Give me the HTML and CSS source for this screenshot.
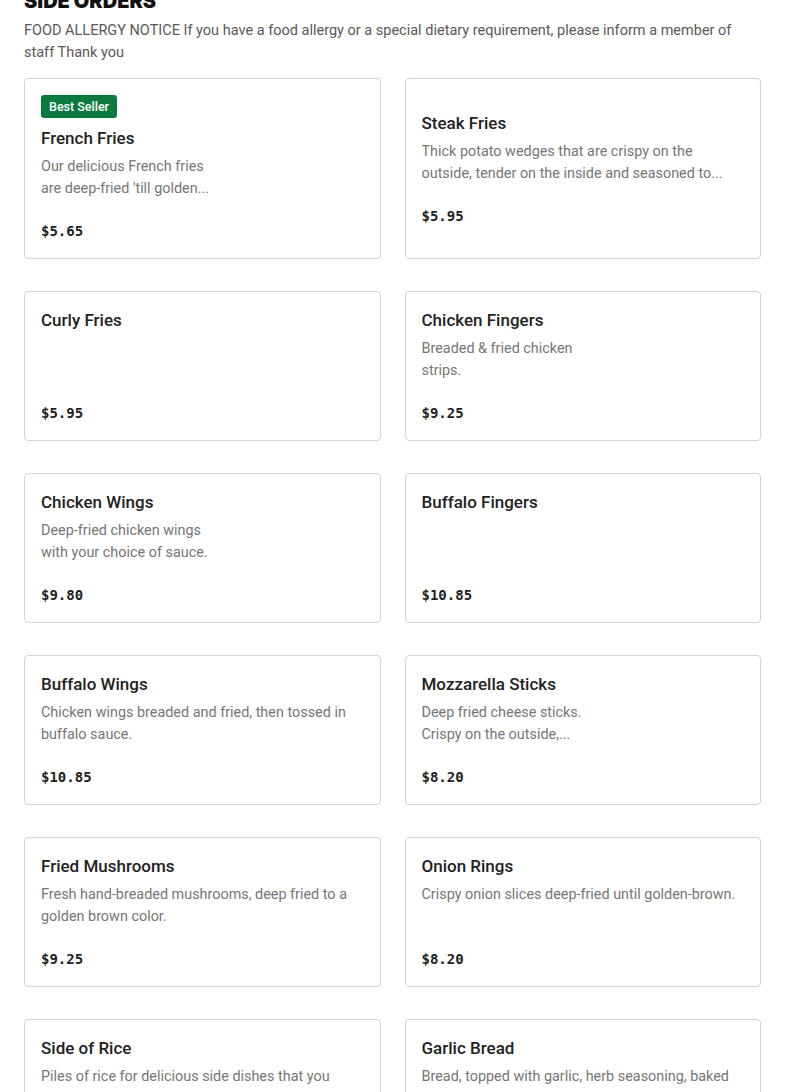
FILE: index.html
```html
<!DOCTYPE html>
<html lang="en">
<head>
    <meta charset="UTF-8">
    <meta name="viewport" content="width=device-width, initial-scale=1.0">
    <title>Side Orders</title>
    <link rel="stylesheet" href="styles.css">
</head>
<body>
    <div class="menu">
        <h2 class="section-title">Side Orders</h2>
        <p class="notice">FOOD ALLERGY NOTICE If you have a food allergy or a special dietary requirement, please inform a member of staff Thank you</p>

        <div class="items">
            <div class="item">
                <span class="badge">Best Seller</span>
                <h3 class="item-name">French Fries</h3>
                <p class="item-desc">Our delicious French fries<br>are deep-fried 'till golden...</p>
                <div class="item-price">$5.65</div>
            </div>
            <div class="item">
                <h3 class="item-name">Steak Fries</h3>
                <p class="item-desc">Thick potato wedges that are crispy on the<br>outside, tender on the inside and seasoned to...</p>
                <div class="item-price">$5.95</div>
            </div>
            <div class="item">
                <h3 class="item-name">Curly Fries</h3>
                <p class="item-desc"></p>
                <div class="item-price">$5.95</div>
            </div>
            <div class="item">
                <h3 class="item-name">Chicken Fingers</h3>
                <p class="item-desc">Breaded &amp; fried chicken<br>strips.</p>
                <div class="item-price">$9.25</div>
            </div>
            <div class="item">
                <h3 class="item-name">Chicken Wings</h3>
                <p class="item-desc">Deep-fried chicken wings<br>with your choice of sauce.</p>
                <div class="item-price">$9.80</div>
            </div>
            <div class="item">
                <h3 class="item-name">Buffalo Fingers</h3>
                <p class="item-desc"></p>
                <div class="item-price">$10.85</div>
            </div>
            <div class="item">
                <h3 class="item-name">Buffalo Wings</h3>
                <p class="item-desc">Chicken wings breaded and fried, then tossed in<br>buffalo sauce.</p>
                <div class="item-price">$10.85</div>
            </div>
            <div class="item">
                <h3 class="item-name">Mozzarella Sticks</h3>
                <p class="item-desc">Deep fried cheese sticks.<br>Crispy on the outside,...</p>
                <div class="item-price">$8.20</div>
            </div>
            <div class="item">
                <h3 class="item-name">Fried Mushrooms</h3>
                <p class="item-desc">Fresh hand-breaded mushrooms, deep fried to a<br>golden brown color.</p>
                <div class="item-price">$9.25</div>
            </div>
            <div class="item">
                <h3 class="item-name">Onion Rings</h3>
                <p class="item-desc">Crispy onion slices deep-fried until golden-brown.</p>
                <div class="item-price">$8.20</div>
            </div>
            <div class="item">
                <h3 class="item-name">Side of Rice</h3>
                <p class="item-desc">Piles of rice for delicious side dishes that you<br>can share with the table...</p>
                <div class="item-price">$4.50</div>
            </div>
            <div class="item">
                <h3 class="item-name">Garlic Bread</h3>
                <p class="item-desc">Bread, topped with garlic, herb seasoning, baked<br>until golden...</p>
                <div class="item-price">$5.25</div>
            </div>
        </div>
    </div>
</body>
</html>
```

FILE: styles.css
```css
body {
    font-family: Roboto, "Liberation Sans", Arial, sans-serif;
    margin: 0;
    padding: 0;
    background: #fff;
    color: #222;
}
.menu {
    padding: 0 24px 40px;
}
.section-title {
    font-family: Inter, "Liberation Sans", sans-serif;
    font-weight: 900;
    font-size: 20px;
    line-height: 24px;
    text-transform: uppercase;
    margin: -11px 0 7px;
    color: #111;
}
.notice {
    font-size: 14.5px;
    line-height: 22px;
    color: #595959;
    margin: 0 0 14px;
}
.items {
    display: grid;
    grid-template-columns: 1fr 1fr;
    column-gap: 24px;
    row-gap: 32px;
}
.item {
    display: flex;
    flex-direction: column;
    justify-content: center;
    align-items: flex-start;
    border: 1px solid #d2d2d2;
    border-radius: 4px;
    padding: 16px;
}
.badge {
    background: #0b7a41;
    color: #fff;
    font-size: 12.5px;
    font-weight: 500;
    line-height: 23px;
    padding: 0 8px;
    border-radius: 3px;
    margin-bottom: 8px;
}
.item-name {
    font-size: 17px;
    font-weight: 500;
    line-height: 24px;
    margin: 0;
    color: #222;
}
.item-desc {
    font-size: 14.4px;
    line-height: 22px;
    height: 44px;
    color: #767676;
    margin: 6px 0 0;
    overflow: hidden;
}
.item-price {
    font-family: "DejaVu Sans Mono", "Liberation Mono", monospace;
    font-weight: bold;
    font-size: 14px;
    line-height: 22px;
    margin-top: 20px;
    color: #222;
}
```
